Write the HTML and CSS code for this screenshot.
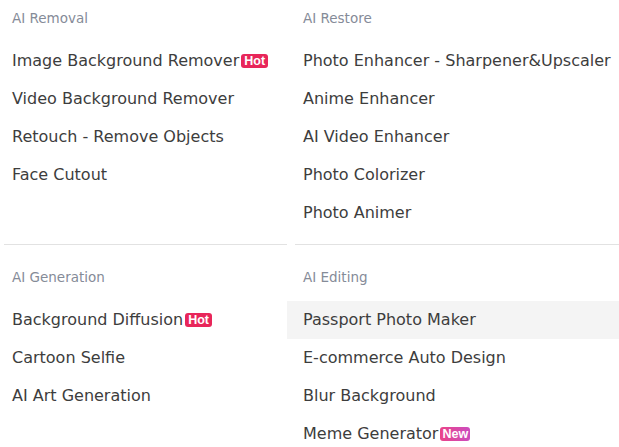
FILE: index.html
```html
<!DOCTYPE html>
<html><head><meta charset="utf-8"><link rel="stylesheet" href="styles.css"></head>
<body>
<div class="menu">
  <section class="group top left">
    <div class="title">AI Removal</div>
    <ul class="items">
      <li class="item">Image Background Remover<span class="badge hot">Hot</span></li>
      <li class="item">Video Background Remover</li>
      <li class="item">Retouch - Remove Objects</li>
      <li class="item">Face Cutout</li>
    </ul>
    <div class="rule"></div>
  </section>
  <section class="group top right">
    <div class="title">AI Restore</div>
    <ul class="items">
      <li class="item">Photo Enhancer - Sharpener&amp;Upscaler</li>
      <li class="item">Anime Enhancer</li>
      <li class="item">AI Video Enhancer</li>
      <li class="item">Photo Colorizer</li>
      <li class="item">Photo Animer</li>
    </ul>
    <div class="rule"></div>
  </section>
  <section class="group bottom left">
    <div class="title">AI Generation</div>
    <ul class="items">
      <li class="item">Background Diffusion<span class="badge hot">Hot</span></li>
      <li class="item">Cartoon Selfie</li>
      <li class="item">AI Art Generation</li>
    </ul>
  </section>
  <section class="group bottom right">
    <div class="title">AI Editing</div>
    <ul class="items">
      <li class="item active">Passport Photo Maker</li>
      <li class="item">E-commerce Auto Design</li>
      <li class="item">Blur Background</li>
      <li class="item">Meme Generator<span class="badge new">New</span></li>
    </ul>
  </section>
</div>
</body></html>
```
FILE: styles.css
```css
html, body {
  margin: 0;
  padding: 0;
  background: #ffffff;
  overflow: hidden;
}
body {
  font-family: "DejaVu Sans", sans-serif;
  color: #333333;
}
.menu {
  display: grid;
  grid-template-columns: 283px 332px;
  padding-left: 4px;
}
.group {
  display: flex;
  flex-direction: column;
}
.group.top {
  padding-top: 8px;
}
.group.bottom {
  padding-top: 22px;
}
.title {
  height: 20px;
  line-height: 20px;
  font-size: 13.5px;
  color: #858b98;
  margin-bottom: 14px;
}
.left .title, .left .item {
  padding-left: 8px;
}
.right .title, .right .item {
  padding-left: 16px;
}
.items {
  list-style: none;
  margin: 0;
  padding: 0;
  flex: 1;
}
.item {
  height: 38px;
  box-sizing: border-box;
  padding-bottom: 1px;
  display: flex;
  align-items: center;
  font-size: 16px;
  white-space: nowrap;
  color: #3d3d3d;
}
.item.active {
  background: #f4f4f4;
}
.rule {
  height: 1px;
  background: #e2e2e2;
  margin-top: 12px;
}
.right .rule {
  margin-left: 8px;
}
.badge {
  margin-left: 2px;
  height: 14px;
  line-height: 14px;
  padding: 0 3px;
  border-radius: 3px;
  color: #ffffff;
  font-family: "Liberation Sans", Arial, sans-serif;
  font-weight: bold;
  font-size: 12.5px;
}
.badge.hot {
  background: #e8265a;
}
.badge.new {
  padding: 0 2px;
  background: linear-gradient(90deg, #ea4488, #cc4cbf);
}
```
